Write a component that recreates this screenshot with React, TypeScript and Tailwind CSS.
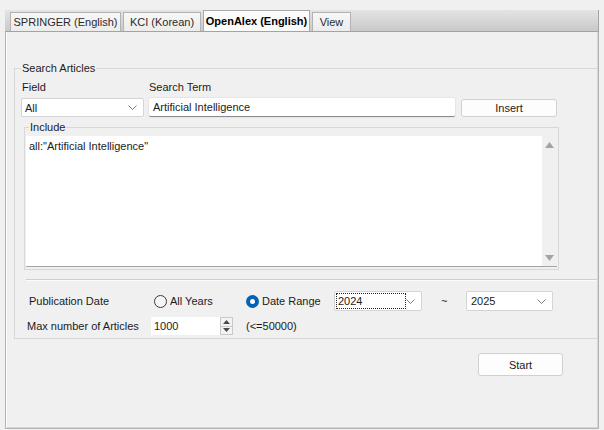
import React from 'react';

const Chevron = () => (
  <svg width="9" height="5" viewBox="0 0 9 5" className="shrink-0">
    <path d="M0.5 0.5 L4.5 4.5 L8.5 0.5" fill="none" stroke="#7d7d7d" strokeWidth="1" />
  </svg>
);

const Tab = ({ label, width, active }: { label: string; width: string; active?: boolean }) => (
  <div
    className={`${width} flex items-center justify-center border border-b-0 ${
      active
        ? 'h-[21px] bg-[#fbfbfb] border-[#a9a9a9] font-bold text-black'
        : 'h-[19px] bg-linear-to-b from-[#f7f7f7] to-[#ececec] border-[#b3b3b3] text-[#2a2a2a]'
    }`}
  >
    {label}
  </div>
);

const Radio = ({ checked, label }: { checked?: boolean; label: string }) => (
  <div className="flex items-center">
    {checked ? (
      <div className="w-[13px] h-[13px] rounded-full bg-[#0063b8] flex items-center justify-center">
        <div className="w-[5px] h-[5px] rounded-full bg-white" />
      </div>
    ) : (
      <div className="w-[13px] h-[13px] rounded-full border border-[#3a3a3a] bg-[#f5f5f5]" />
    )}
    <span className="ml-[3px]">{label}</span>
  </div>
);

const Arrow = ({ up }: { up?: boolean }) => (
  <svg width="7" height="4" viewBox="0 0 7 4">
    <path d={up ? 'M0 4 L3.5 0 L7 4 Z' : 'M0 0 L3.5 4 L7 0 Z'} fill="#4a4a4a" />
  </svg>
);

export default function App() {
  return (
    <div className="w-[604px] h-[430px] bg-[#f0f0f0] pt-[10px] px-[5px] text-[11px] leading-[14px] text-[#1b1b1b] whitespace-nowrap font-['Liberation_Sans',Arial,sans-serif] overflow-hidden">
      {/* tab strip */}
      <div className="h-[22px] flex items-end gap-[2px] pl-[5px] bg-linear-to-b from-[#e4e4e4] to-[#c9c9c9] border-b border-r border-[#a3a3a3]">
        <Tab label="SPRINGER (English)" width="w-[111px]" />
        <Tab label="KCI (Korean)" width="w-[78px]" />
        <Tab label="OpenAlex (English)" width="w-[107px]" active />
        <Tab label="View" width="w-[39px]" />
      </div>

      {/* panel */}
      <div className="h-[397px] flex flex-col border-x border-b border-[#b4b4b4] shadow-[inset_1px_0_0_#fafafa,inset_-1px_-1px_0_#d6d6d6]">
        <fieldset className="mt-[29px] ml-[8px] mr-[1px] pb-[3px] border border-[#d8d8d8] border-r-0">
          <legend className="ml-[6px] px-[1px]">Search Articles</legend>

          <div className="pl-[6px]">
            <div className="mt-[5px] flex">
              <span className="w-[128px] pl-[1px]">Field</span>
              <span>Search Term</span>
            </div>

            <div className="mt-[4px] flex items-center">
              <div className="w-[123px] h-[19px] bg-white border border-[#d4d4d4] rounded-[2px] flex items-center justify-between pl-[3px] pr-[6px]">
                <span>All</span>
                <Chevron />
              </div>
              <div className="ml-[5px] w-[306px] h-[19px] bg-white border-b border-[#8a8a8a] rounded-[2px] shadow-[0_0_0_1px_#e6e6e6] flex items-center pl-[4px]">
                Artificial Intelligence
              </div>
              <button className="ml-[6px] w-[96px] h-[18px] bg-[#fdfdfd] border border-[#d0d0d0] rounded-[3px] flex items-center justify-center">
                Insert
              </button>
            </div>

            <fieldset className="mt-[3px] ml-[3px] w-[535px] px-[1px] pb-[2px] border border-[#d8d8d8]">
              <legend className="ml-[3px] px-[1px]">Include</legend>
              <div className="mt-[2px] h-[131px] flex bg-white border-b border-[#a5a5a5]">
                <div className="flex-1 pl-[3px] pt-[3px]">all:"Artificial Intelligence"</div>
                <div className="w-[15px] bg-[#f0f0f0] flex flex-col items-center justify-between pt-[6px] pb-[5px]">
                  <svg width="9" height="6" viewBox="0 0 9 6"><path d="M0 6 L4.5 0 L9 6 Z" fill="#a3a3a3" /></svg>
                  <svg width="9" height="6" viewBox="0 0 9 6"><path d="M0 0 L4.5 6 L9 0 Z" fill="#a3a3a3" /></svg>
                </div>
              </div>
            </fieldset>

            <div className="mt-[9px] ml-[5px] border-t border-[#cfcfcf] shadow-[0_1px_0_#fbfbfb]" />

            <div className="mt-[11px] h-[20px] flex items-center">
              <span className="ml-[8px] w-[125px]">Publication Date</span>
              <div className="w-[92px]">
                <Radio label="All Years" />
              </div>
              <div className="w-[88px]">
                <Radio checked label="Date Range" />
              </div>
              <div className="w-[88px] h-[20px] bg-white border border-[#d4d4d4] rounded-[2px] flex items-center justify-between pl-[1px] pr-[6px]">
                <span className="w-[70px] h-[16px] border border-dotted border-[#222] pl-[1px] leading-[14px]">2024</span>
                <Chevron />
              </div>
              <span className="ml-[19px] w-[25px]">~</span>
              <div className="w-[87px] h-[20px] bg-white border border-[#d4d4d4] rounded-[2px] flex items-center justify-between pl-[4px] pr-[6px]">
                <span>2025</span>
                <Chevron />
              </div>
            </div>

            <div className="mt-[6px] h-[18px] flex items-center">
              <span className="ml-[6px] w-[124px]">Max number of Articles</span>
              <div className="w-[69px] h-[18px] bg-white flex items-center pl-[3px]">1000</div>
              <div className="w-[13px] h-[18px] flex flex-col border border-[#c9c9c9] bg-[#f3f3f3]">
                <div className="flex-1 flex items-center justify-center border-b border-[#c9c9c9]">
                  <Arrow up />
                </div>
                <div className="flex-1 flex items-center justify-center">
                  <Arrow />
                </div>
              </div>
              <span className="ml-[13px]">(&lt;=50000)</span>
            </div>
          </div>
        </fieldset>

        <div className="mt-[14px] flex justify-end pr-[35px]">
          <button className="w-[85px] h-[23px] bg-[#fdfdfd] border border-[#d0d0d0] rounded-[3px] flex items-center justify-center">
            Start
          </button>
        </div>
      </div>
    </div>
  );
}
